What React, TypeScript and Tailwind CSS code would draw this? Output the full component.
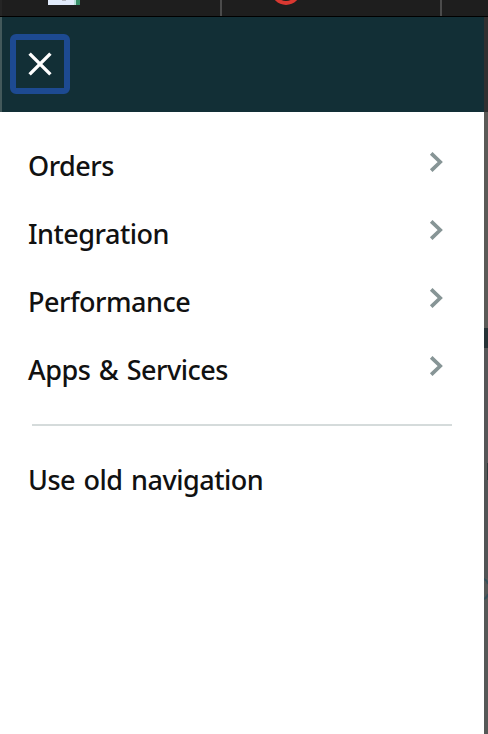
const items = ["Orders", "Integration", "Performance", "Apps & Services"];

const labelClass =
  "text-[27px] leading-9 font-medium tracking-[-0.5px] whitespace-nowrap [word-spacing:2px]";

function Chevron() {
  return (
    <svg width="14" height="20" viewBox="0 0 14 20" fill="none" className="mb-2 shrink-0">
      <path d="M2.2 1.3 L11.2 10 L2.2 18.7" stroke="#879596" strokeWidth="3.7" />
    </svg>
  );
}

function TabStrip() {
  return (
    <div className="flex h-[17px] justify-between overflow-hidden border-b border-black bg-[#1e1e1e]">
      <div className="flex w-[222px] items-start border-r-2 border-[#4b4b4b]">
        <div className="h-4 w-0.5 bg-[#252525]" />
        <div className="ml-[46px] flex h-[5px] w-8 bg-[#e1ebfb]">
          <div className="ml-[14px] h-px w-1 bg-[#b4b8c2]" />
          <div className="ml-auto h-full w-0.5 bg-[#b9dfdb]" />
          <div className="h-full w-1 bg-[#38906a]" />
        </div>
      </div>
      <div className="w-[220px] border-r-2 border-[#4b4b4b]">
        <svg width="60" height="16" viewBox="0 0 60 16" className="ml-[34px]">
          <circle cx="30" cy="-10" r="13" fill="none" stroke="#d93831" strokeWidth="4" />
        </svg>
      </div>
      <div className="w-[46px]" />
    </div>
  );
}

export default function App() {
  return (
    <div className="flex h-[734px] w-[488px] flex-col overflow-hidden bg-white font-['Noto_Sans',sans-serif] text-[#111111]">
      <TabStrip />
      <div className="flex flex-1">
        <nav className="flex w-[484px] flex-col bg-white">
          <header className="flex h-[95px] border-l-2 border-[#43595b] bg-[#122f36] pt-[17px] pl-2">
            <button
              aria-label="Close"
              className="flex size-[60px] items-center justify-center rounded-md border-6 border-[#1d4a91]"
            >
              <svg width="24" height="24" viewBox="0 0 24 24" fill="none">
                <path d="M1.6 1.6 L22.4 22.4 M22.4 1.6 L1.6 22.4" stroke="white" strokeWidth="3.4" />
              </svg>
            </button>
          </header>
          <ul className="pt-5">
            {items.map((label) => (
              <li key={label} className="flex h-[68px] items-center justify-between pr-[41px] pl-7">
                <span className={labelClass}>{label}</span>
                <Chevron />
              </li>
            ))}
          </ul>
          <div className="mx-8 mt-5 h-0.5 bg-[#d5dbdb]" />
          <a className={`mt-9 pl-7 ${labelClass}`}>Use old navigation</a>
        </nav>
        <aside className="flex w-1 flex-col overflow-hidden bg-[#555857]">
          <div className="h-[95px] shrink-0 bg-[#303030]" />
          <div className="h-[216px] shrink-0 bg-[#5b5a57]" />
          <div className="h-5 shrink-0 bg-[#263236]" />
          <div className="h-[115px] shrink-0 bg-[#555657]" />
          <div className="ml-auto h-[17px] w-px shrink-0 bg-[#30393b]" />
          <div className="h-[98px] shrink-0 bg-[#515455]" />
          <svg width="4" height="22" viewBox="0 0 4 22" className="shrink-0">
            <path d="M0 1 Q3 2 4 6 M0 21 Q3 20 4 16" fill="none" stroke="#35505a" strokeWidth="2" />
          </svg>
        </aside>
      </div>
    </div>
  );
}
